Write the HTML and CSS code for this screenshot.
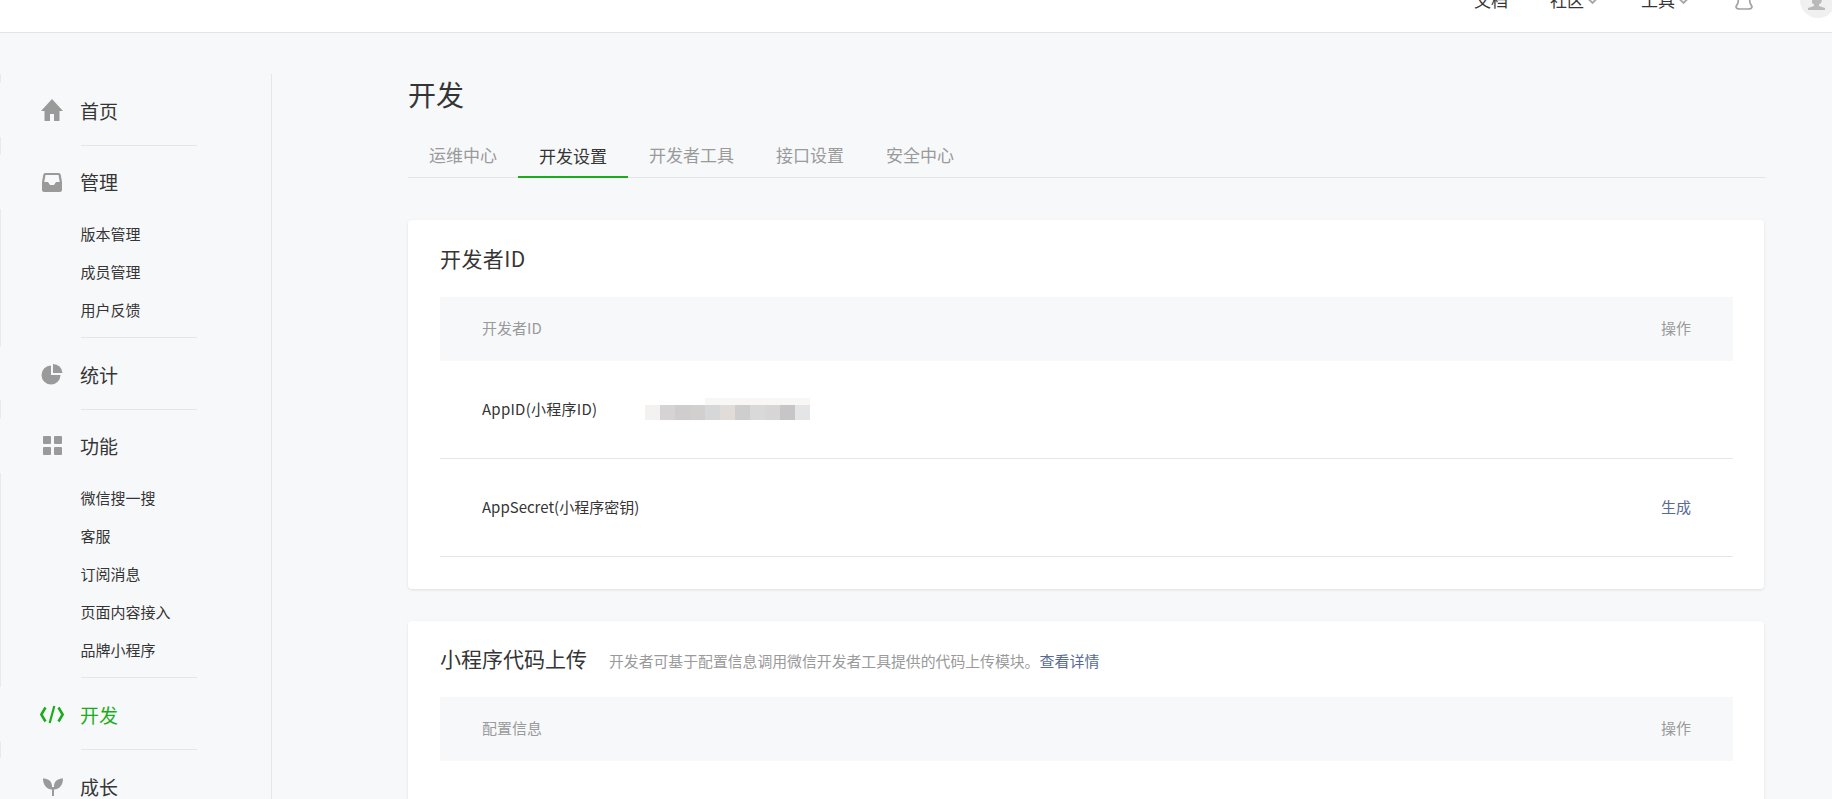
FILE: index.html
```html
<!DOCTYPE html>
<html lang="zh-CN">
<head>
<meta charset="utf-8">
<title>开发设置</title>
<link rel="stylesheet" href="styles.css">
</head>
<body>
<header class="topbar">
  <nav class="topnav">
    <a class="topnav-item docs">文档</a>
    <a class="topnav-item community">社区<svg class="chev" viewBox="0 0 10 6"><path d="M1 .5l4 4 4-4" fill="none" stroke="#a8a8a8" stroke-width="1.800"/></svg></a>
    <a class="topnav-item tools">工具<svg class="chev" viewBox="0 0 10 6"><path d="M1 .5l4 4 4-4" fill="none" stroke="#a8a8a8" stroke-width="1.800"/></svg></a>
    <svg class="bell" viewBox="0 0 18 10"><path d="M3.500 -2L3 3 1 6.500C1 8 3 9 5 9h8c2 0 4-1 4-2.500L15 3l-.500-5" fill="none" stroke="#a3a3a3" stroke-width="1.700"/></svg>
    <span class="avatar"><svg viewBox="0 0 36 18" class="avatar-icon"><path d="M12 0h10l-1 3-2 1.500V6l6 2v2H8V8l6-2V4.500L12 3z" fill="#b9b9b9"/></svg></span>
  </nav>
</header>
<div class="page">
  <aside class="sidebar">
    <section class="side-group">
      <div class="side-head"><svg class="side-icon" viewBox="0 0 24 24"><path d="M12 1L1 13h3.500v10h5.500v-7h4v7h5.500V13H23z" fill="#9a9a9a"/></svg>首页</div>
    </section>
    <section class="side-group">
      <div class="side-head has-sub"><svg class="side-icon" viewBox="0 0 24 24"><path d="M5.500 4h13c1 0 1.800.6 2.200 1.500L22 13v8c0 1.200-.9 2-2 2H4c-1.100 0-2-.8-2-2v-8l1.300-7.500C3.700 4.600 4.500 4 5.500 4zm0 2l-1.200 7H8l2 3h4l2-3h3.700l-1.200-7z" fill="#9a9a9a"/></svg>管理</div>
      <ul class="side-sub">
        <li>版本管理</li><li>成员管理</li><li>用户反馈</li>
      </ul>
    </section>
    <section class="side-group">
      <div class="side-head"><svg class="side-icon" viewBox="0 0 24 24"><path d="M11 3.500a9.500 9.500 0 1 0 9.500 9.500H11z" fill="#9a9a9a"/><path d="M13 2v9h9.500A9.500 9.500 0 0 0 13 2z" fill="#9a9a9a"/></svg>统计</div>
    </section>
    <section class="side-group">
      <div class="side-head has-sub"><svg class="side-icon" viewBox="0 0 24 24"><rect x="3" y="3" width="8" height="8" rx="1" fill="#9a9a9a"/><rect x="14" y="3" width="8" height="8" rx="1" fill="#9a9a9a"/><rect x="3" y="14" width="8" height="8" rx="1" fill="#9a9a9a"/><rect x="14" y="14" width="8" height="8" rx="1" fill="#9a9a9a"/></svg>功能</div>
      <ul class="side-sub">
        <li>微信搜一搜</li><li>客服</li><li>订阅消息</li><li>页面内容接入</li><li>品牌小程序</li>
      </ul>
    </section>
    <section class="side-group">
      <div class="side-head active"><svg class="side-icon" viewBox="0 0 24 24"><path d="M5.500 5.500L1.300 12.500l4.200 7M18.500 5.500l4.200 7-4.200 7" fill="none" stroke="#1aad19" stroke-width="2.600"/><path d="M14.300 4L9.700 21" fill="none" stroke="#1aad19" stroke-width="2.200"/></svg>开发</div>
    </section>
    <section class="side-group">
      <div class="side-head"><svg class="side-icon" viewBox="0 0 24 24"><path d="M3 4.500c5 0 8.500 2.500 9 7v4C6 15 3 10.500 3 4.500zM23 4.500c-5 0-8.500 2.500-9 7v4c6-.5 9-5 9-11zM12 13h2v9h-2z" fill="#9a9a9a"/></svg>成长</div>
    </section>
  </aside>
  <main class="content">
    <h1 class="page-title">开发</h1>
    <div class="tabs">
      <a class="tab">运维中心</a>
      <a class="tab tab-active">开发设置</a>
      <a class="tab">开发者工具</a>
      <a class="tab">接口设置</a>
      <a class="tab">安全中心</a>
    </div>
    <section class="card first-card">
      <h2 class="card-title">开发者ID</h2>
      <div class="row row-head"><span>开发者ID</span><span>操作</span></div>
      <div class="row row-body">
        <span class="cell-label appid">AppID(小程序ID)</span>
        <span class="mosaic">
          <i class="m1"></i><i class="m2"></i><i class="m3"></i><i class="m4"></i><i class="m5"></i><i class="m6"></i><i class="m7"></i><i class="m8"></i><i class="m9"></i><i class="m10"></i><i class="m11"></i>
        </span>
      </div>
      <div class="row row-body">
        <span class="cell-label">AppSecret(小程序密钥)</span>
        <a class="link action">生成</a>
      </div>
    </section>
    <section class="card second-card">
      <h2 class="card-title">小程序代码上传<span class="card-desc">开发者可基于配置信息调用微信开发者工具提供的代码上传模块。<a class="link">查看详情</a></span></h2>
      <div class="row row-head"><span>配置信息</span><span>操作</span></div>
    </section>
  </main>
</div>
</body>
</html>
```
FILE: styles.css
```css
* { box-sizing: border-box; }
html, body { margin: 0; height: 799px; overflow: hidden; }
body {
  background-color: #f7f8fa;
  background-image:
    linear-gradient(to bottom,
      transparent 74px, #e9eaec 74px, #e9eaec 82px, transparent 82px,
      transparent 137px, #e9eaec 137px, #e9eaec 154px, transparent 154px,
      transparent 209px, #e9eaec 209px, #e9eaec 347px, transparent 347px,
      transparent 400px, #e9eaec 400px, #e9eaec 418px, transparent 418px,
      transparent 473px, #e9eaec 473px, #e9eaec 687px, transparent 687px,
      transparent 742px, #e9eaec 742px, #e9eaec 758px, transparent 758px);
  background-size: 1px 799px;
  background-repeat: no-repeat;
  font-family: "Noto Sans CJK SC", "Liberation Sans", sans-serif;
  color: #353535;
}
.topbar {
  height: 33px;
  background: #fff;
  border-bottom: 1px solid #e5e5e7;
  overflow: hidden;
  display: flex;
  justify-content: flex-end;
  align-items: flex-end;
}
.topnav { display: flex; align-items: flex-end; height: 32px; }
.topnav-item {
  display: flex;
  align-items: flex-end;
  font-size: 17px;
  line-height: 24px;
  margin-bottom: 20px;
  white-space: nowrap;
}
.docs { margin-right: 42px; }
.community { margin-right: 43px; }
.tools { margin-right: 46px; }
.chev { width: 11px; height: 6.600px; margin: 0 0 7px 3px; flex: none; }
.bell { width: 18px; height: 10px; margin-bottom: 22px; margin-right: 47px; display: block; }
.avatar {
  display: block;
  width: 36px;
  height: 18px;
  margin-bottom: 14px;
  margin-right: -4px;
  background: #f0f0f0;
  border-radius: 0 0 18px 18px;
  overflow: hidden;
}
.avatar-icon { display: block; width: 36px; height: 18px; }

.page { display: flex; align-items: flex-start; }
.sidebar {
  width: 272px;
  flex: none;
  margin-top: 41px;
  padding-left: 40px;
  border-right: 1px solid #e5e6e8;
  height: 760px;
}
.side-group { padding-top: 3px; }
.side-group:not(:last-child)::after {
  content: "";
  display: block;
  width: 116px;
  height: 1px;
  margin-left: 41px;
  background: #e5e6e8;
}
.side-head {
  display: flex;
  align-items: center;
  height: 68px;
  padding-bottom: 2px;
  font-size: 19px;
}
.side-head.has-sub { padding-bottom: 4px; }
.side-head.active { color: #1aad19; }
.side-icon { width: 24px; height: 24px; margin-right: 16px; flex: none; }
.side-sub {
  list-style: none;
  margin: -2px 0 0;
  padding: 0 0 8px 40.500px;
}
.side-sub li { height: 38px; line-height: 38px; font-size: 15px; }

.content { width: 1358px; margin-left: 136px; }
.page-title {
  margin: 0;
  padding-top: 41px;
  font-size: 28px;
  font-weight: 400;
  line-height: 40px;
  height: 81px;
}
.tabs {
  display: flex;
  height: 64px;
  align-items: flex-end;
  border-bottom: 1px solid #e5e6e8;
}
.tab {
  padding: 0 21px;
  font-size: 17px;
  height: 44px;
  line-height: 44px;
  color: #9a9a9a;
}
.tab-active { color: #353535; border-bottom: 2px solid #1aad19; margin-bottom: -1px; }
.card {
  width: 1356px;
  background: #fff;
  border-radius: 4px;
  box-shadow: 0 1px 3px rgba(0,0,0,.1);
  padding: 0 31px 0 32px;
}
.first-card { margin-top: 42px; height: 369px; }
.second-card { margin-top: 32px; height: 300px; }
.card-title {
  margin: 0;
  height: 77px;
  padding-top: 19px;
  font-size: 21px;
  font-weight: 400;
  line-height: 39px;
  white-space: nowrap;
}
.first-card .card-title { letter-spacing: .4px; }
.second-card .card-title { height: 76px; padding-top: 18px; }
.card-desc { font-size: 14.850px; color: #9a9a9a; margin-left: 22px; }
.link { color: #576b95; font-size: 15px; }
.row {
  display: flex;
  justify-content: space-between;
  align-items: center;
  padding: 0 42px;
  font-size: 15px;
}
.row-head { height: 64px; padding-bottom: 3px; background: #f7f8fa; color: #9a9a9a; }
.row-body { height: 98px; padding-bottom: 2px; border-bottom: 1px solid #e5e6e8; justify-content: flex-start; }
.cell-label { width: 163px; flex: none; }
.appid { letter-spacing: .25px; }
.action { margin-left: auto; }
.mosaic {
  display: flex;
  width: 165px;
  height: 22px;
  align-items: flex-end;
  background: linear-gradient(#f8f7f6, #f8f7f6) no-repeat 60px 0 / 105px 7px;
}
.mosaic i { display: block; width: 15px; height: 15px; }
.mosaic .m1 { background: #f3f2f1; }
.mosaic .m2 { background: #d5d3d4; }
.mosaic .m3 { background: #cfcdce; }
.mosaic .m4 { background: #d2cfcf; }
.mosaic .m5 { background: #d6d7d9; }
.mosaic .m6 { background: #e0dcda; }
.mosaic .m7 { background: #cfcecf; }
.mosaic .m8 { background: #d9d9d9; }
.mosaic .m9 { background: #d6d6d7; }
.mosaic .m10 { background: #c7c5c6; }
.mosaic .m11 { background: #e3e5e6; }
```
